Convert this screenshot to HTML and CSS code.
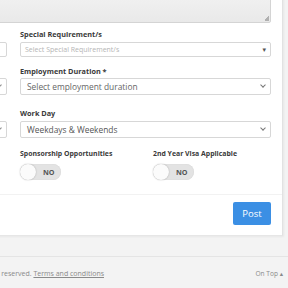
FILE: index.html
```html
<!DOCTYPE html>
<html>
<head>
<meta charset="utf-8">
<link rel="stylesheet" href="styles.css">
</head>
<body>
<div class="page">
  <div class="card">
    <div class="form">
      <div class="textarea-row"><div class="textarea"><span class="grip"></span></div></div>
      <div class="grid">
        <div class="col left">
          <div class="field f1"><div class="sel small"></div></div>
          <div class="field f2"><div class="sel"><span class="chev"></span></div></div>
          <div class="field f3"><div class="sel"><span class="chev"></span></div></div>
        </div>
        <div class="col right">
          <div class="field f1">
            <div class="label">Special Requirement/s</div>
            <div class="sel small"><span class="ph">Select Special Requirement/s</span><span class="arrow">▾</span></div>
          </div>
          <div class="field f2">
            <div class="label">Employment Duration *</div>
            <div class="sel"><span class="val muted">Select employment duration</span><span class="chev"></span></div>
          </div>
          <div class="field f3">
            <div class="label">Work Day</div>
            <div class="sel"><span class="val">Weekdays &amp; Weekends</span><span class="chev"></span></div>
          </div>
          <div class="toggles">
            <div class="tg">
              <div class="label sm">Sponsorship Opportunities</div>
              <div class="switch"><span class="knob"></span><span class="no">NO</span></div>
            </div>
            <div class="tg">
              <div class="label sm">2nd Year Visa Applicable</div>
              <div class="switch"><span class="knob"></span><span class="no">NO</span></div>
            </div>
          </div>
        </div>
      </div>
    </div>
    <div class="actions"><button class="post">Post</button></div>
  </div>
  <div class="footer">
    <div class="copy">All rights reserved. <a href="#">Terms and conditions</a></div>
    <div class="top">On Top ▴</div>
  </div>
</div>
</body>
</html>
```
FILE: styles.css
```css
html, body {
  margin: 0;
  padding: 0;
  background: #f3f3f3;
  overflow: hidden;
  font-family: "Open Sans", "DejaVu Sans", sans-serif;
}
.page {
  width: 288px;
  height: 288px;
  overflow: hidden;
  position: relative;
}
.card {
  margin-top: -30px;
  margin-left: -260px;
  width: 542px;
  background: #fff;
  border-right: 1px solid #e2e2e2;
  border-bottom: 1px solid #e6e6e6;
  box-shadow: 1px 1px 2px rgba(0,0,0,0.05);
}
.form {
  padding: 0 11px 14px 11px;
  border-bottom: 1px solid #f2f2f2;
}
.textarea {
  height: 51px;
  border: 1px solid #d4d4d4;
  border-radius: 2px;
  background: linear-gradient(#f9f9f9, #e9e9e9);
  position: relative;
}
.grip {
  position: absolute;
  right: 1px;
  bottom: 1px;
  width: 5px;
  height: 5px;
  background: linear-gradient(135deg, transparent 50%, #b0b0b0 50%);
}
.grid {
  display: grid;
  grid-template-columns: 248px 251px;
  column-gap: 13px;
  margin-left: 8px;
}
.col {
  display: flex;
  flex-direction: column;
}
.field {
  display: flex;
  flex-direction: column;
}
.label {
  font-weight: 700;
  font-size: 7.3px;
  color: #3a3a3a;
  line-height: 11px;
  height: 11px;
}
.f1 { padding-top: 6px; }
.f1 .label { margin-bottom: 2px; }
.f2 { padding-top: 9px; }
.f2 .label { margin-bottom: 1px; }
.f3 { padding-top: 13px; }
.f3 .label { margin-bottom: 2px; }
.left .f1 { padding-top: 19px; }
.left .f2 { padding-top: 21px; }
.left .f3 { padding-top: 26px; }
.sel {
  height: 15px;
  border: 1px solid #d7d7d7;
  border-radius: 2px;
  background: #fff;
  display: flex;
  align-items: center;
  padding: 0 6px 0 6px;
  position: relative;
}
.sel.small { height: 13px; padding-left: 4px; }
.ph {
  font-size: 7px;
  color: #b5b5b5;
}
.val {
  font-size: 8.4px;
  color: #555;
}
.val.muted { color: #666; }
.arrow {
  position: absolute;
  right: 4px;
  top: 2px;
  font-size: 7px;
  color: #555;
  line-height: 9px;
}
.chev {
  position: absolute;
  right: 5px;
  top: 4px;
  width: 3px;
  height: 3px;
  border-right: 1.2px solid #777;
  border-bottom: 1.2px solid #777;
  transform: rotate(45deg);
}
.toggles {
  display: grid;
  grid-template-columns: 133px 118px;
  padding-top: 10px;
}
.label.sm { font-size: 6.9px; margin-bottom: 5px; }
.switch {
  width: 41px;
  height: 16px;
  border-radius: 8px;
  background: #e3e3e3;
  position: relative;
  display: flex;
  align-items: center;
  box-shadow: inset 0 0 1px rgba(0,0,0,0.15);
}
.knob {
  position: absolute;
  left: 0;
  top: 0;
  width: 16px;
  height: 16px;
  border-radius: 50%;
  background: #fbfbfb;
  box-shadow: 0 0 1.5px rgba(0,0,0,0.3);
}
.no {
  margin-left: 23px;
  font-size: 7.2px;
  font-weight: 700;
  color: #555;
}
.actions {
  display: flex;
  justify-content: flex-end;
  padding: 7px 11px 10px 0;
}
.post {
  width: 38px;
  height: 23px;
  border: none;
  border-radius: 2px;
  background: #3b8fe4;
  color: #fff;
  font-family: "Open Sans", sans-serif;
  font-size: 9.5px;
  padding: 0;
}
.footer {
  margin-top: 20px;
  border-top: 1px solid #e4e4e4;
  display: flex;
  justify-content: space-between;
  align-items: center;
  padding: 12px 5px 0 0;
  margin-left: -29px;
  font-size: 7px;
  color: #8a8a8a;
}
.footer a { color: #8a8a8a; }
.top { font-size: 6.6px; }
```
